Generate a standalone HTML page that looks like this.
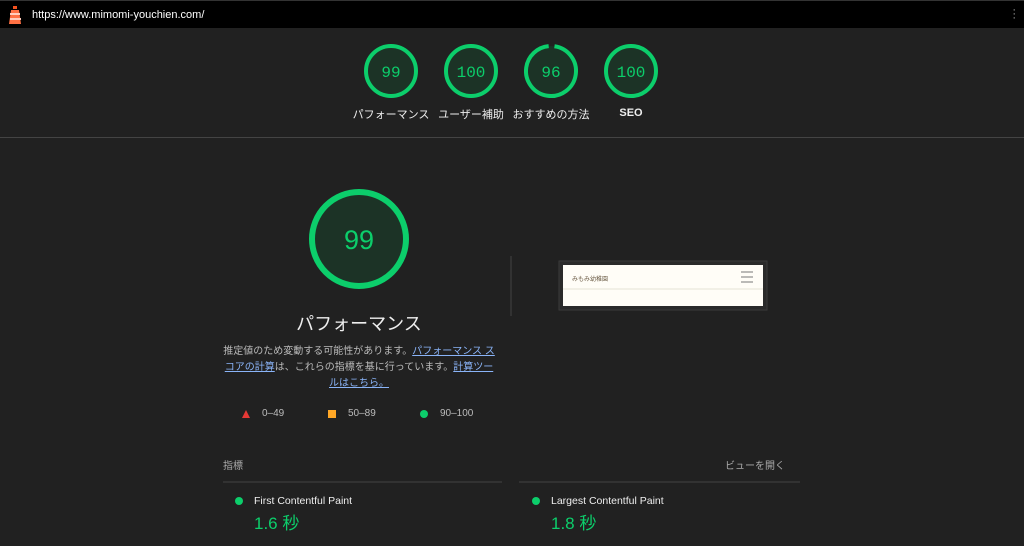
<!DOCTYPE html>
<html><head><meta charset="utf-8"><style>
*{margin:0;padding:0;box-sizing:border-box}
body{width:1024px;height:546px;overflow:hidden;background:#212121;font-family:"Liberation Sans","Noto Sans CJK JP",sans-serif;color:#e0e0e0;position:relative}
.top{position:absolute;left:0;top:0;width:1024px;height:28px;background:#000;border-top:1px solid #333}
.url{position:absolute;left:32px;top:8px;font-size:11px;color:#fff}
.abs{position:absolute}
.lbl{position:absolute;font-size:11px;color:#eee;text-align:center;width:90px;top:106px}
.gtxt{font-family:"Liberation Mono",monospace;fill:#0cce6b}
a{color:#8ab4f8}
.sep{position:absolute;left:0;top:137px;width:1024px;height:1px;background:#444}
</style></head><body>
<div class="top">
<svg class="abs" style="left:8px;top:5px" width="14" height="18" viewBox="0 0 14 18"><rect x="5" y="0" width="4" height="3" fill="#f4511e"/><path d="M3 4h8l2 14H1z" fill="#ff7043"/><rect x="2" y="7" width="10" height="2" fill="#ffccbc"/><rect x="2" y="12" width="11" height="2" fill="#ffccbc"/></svg>
<div class="url">https://www.mimomi-youchien.com/</div>
<div class="abs" style="right:8px;top:7px;color:#aaa;font-size:11px;line-height:4px">·<br>·<br>·</div>
</div>
<svg class="abs" style="left:0;top:0" width="1024" height="546">
<g fill="#1c3326" stroke="#0cce6b" stroke-width="4">
<circle cx="391" cy="71" r="25"/><circle cx="471" cy="71" r="25"/><circle cx="631" cy="71" r="25"/>
<circle cx="359" cy="239" r="47" stroke-width="6"/>
</g>
<circle cx="551" cy="71" r="25" fill="#1c3326" stroke="#0cce6b" stroke-width="4" stroke-dasharray="151 157" transform="rotate(-82 551 71)"/>
<g class="gtxt" font-size="16" text-anchor="middle">
<text x="391" y="77">99</text><text x="471" y="77">100</text><text x="551" y="77">96</text><text x="631" y="77">100</text>
<text x="359" y="249" font-size="27" font-family="Liberation Sans">99</text>
</g>
<line x1="511" y1="256" x2="511" y2="316" stroke="#444"/>
<rect x="559" y="261" width="208" height="49" fill="#2a2a2a" stroke="#3a3a3a"/>
<rect x="563" y="265" width="200" height="41" fill="#fffdf7"/>
<line x1="563" y1="289" x2="763" y2="289" stroke="#e6e2d6"/>
<text x="572" y="281" font-size="6" fill="#6a5a44" font-family="Noto Sans CJK JP">みもみ幼稚園</text>
<g stroke="#777" stroke-width="1"><line x1="741" y1="272" x2="753" y2="272"/><line x1="741" y1="277" x2="753" y2="277"/><line x1="741" y1="282" x2="753" y2="282"/></g>
<polygon points="246,410 242,418 250,418" fill="#e53935"/>
<rect x="328" y="410" width="8" height="8" fill="#ffa726"/>
<circle cx="424" cy="414" r="4" fill="#0cce6b"/>
<line x1="223" y1="482" x2="502" y2="482" stroke="#444"/>
<line x1="519" y1="482" x2="800" y2="482" stroke="#444"/>
<circle cx="239" cy="501" r="4" fill="#0cce6b"/>
<circle cx="536" cy="501" r="4" fill="#0cce6b"/>
</svg>
<div class="lbl" style="left:346px">パフォーマンス</div>
<div class="lbl" style="left:426px">ユーザー補助</div>
<div class="lbl" style="left:506px">おすすめの方法</div>
<div class="lbl" style="left:586px;font-weight:bold;top:107px">SEO</div>
<div class="sep"></div>
<div class="abs" style="left:259px;top:310px;width:200px;text-align:center;font-size:18px;color:#eee">パフォーマンス</div>
<div class="abs" style="left:222px;top:344px;width:274px;text-align:center;font-size:10px;line-height:16px;color:#bbb">推定値のため変動する可能性があります。<a href="#">パフォーマンス スコアの計算</a>は、これらの指標を基に行っています。<a href="#">計算ツールはこちら。</a></div>
<div class="abs" style="left:262px;top:408px;font-size:10px;color:#bbb">0–49</div>
<div class="abs" style="left:348px;top:408px;font-size:10px;color:#bbb">50–89</div>
<div class="abs" style="left:440px;top:408px;font-size:10px;color:#bbb">90–100</div>
<div class="abs" style="left:223px;top:457px;font-size:10px;color:#aaa">指標</div>
<div class="abs" style="left:725px;top:457px;font-size:10px;color:#aaa">ビューを開く</div>
<div class="abs" style="left:254px;top:495px;font-size:10.5px;color:#eee">First Contentful Paint</div>
<div class="abs" style="left:551px;top:495px;font-size:10.5px;color:#eee">Largest Contentful Paint</div>
<div class="abs" style="left:254px;top:509px;font-size:17px;color:#0cce6b">1.6 秒</div>
<div class="abs" style="left:551px;top:509px;font-size:17px;color:#0cce6b">1.8 秒</div>
</body></html>
